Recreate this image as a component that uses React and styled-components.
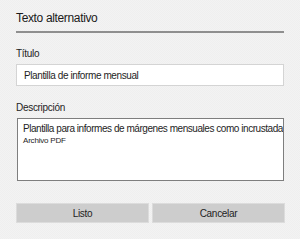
import styled, { createGlobalStyle } from "styled-components";

const GlobalS = createGlobalStyle`
    html, body {
        margin: 0;
        padding: 0;
        background: #f2f2f2;
    }
    * {
        box-sizing: border-box;
    }
`;

const App = () => {
    return (
        <>
            <GlobalS/>
            <PanelS>
                <TitleS>Texto alternativo</TitleS>
                <DividerS/>

                <LabelS>Título</LabelS>
                <FieldS>Plantilla de informe mensual</FieldS>

                <LabelS $top={16}>Descripción</LabelS>
                <AreaS>
                    <AreaLineS>Plantilla para informes de márgenes mensuales como incrustada</AreaLineS>
                    <AreaSmallS>Archivo PDF</AreaSmallS>
                </AreaS>

                <ButtonRowS>
                    <ButtonS type="button">Listo</ButtonS>
                    <ButtonS type="button">Cancelar</ButtonS>
                </ButtonRowS>
            </PanelS>
        </>
    );
};

const PanelS = styled.div`
    width: 300px;
    height: 239px;
    padding: 11px 16px 0 16px;
    display: flex;
    flex-direction: column;
    font-family: "Liberation Sans", Arial, sans-serif;
    color: #1e1e1e;
    background: repeating-conic-gradient(#f3f3f3 0 25%, #efefef 0 50%) 0 0 / 2px 2px;
`;

const TitleS = styled.div`
    font-size: 12px;
    line-height: 15px;
    letter-spacing: -0.35px;
    color: #1a1a1a;
`;

const DividerS = styled.div`
    width: 268px;
    height: 2px;
    margin-top: 5px;
    background: #8f8f8f;
`;

const LabelS = styled.div`
    margin-top: ${({$top}) => ($top ?? 15)}px;
    font-size: 10px;
    line-height: 12px;
    letter-spacing: -0.3px;
`;

const FieldS = styled.div`
    width: 268px;
    height: 22px;
    margin-top: 4px;
    padding: 2px 7px 0 7px;
    background: #ffffff;
    border: 1px solid #d4d4d4;
    font-size: 10px;
    line-height: 18px;
    letter-spacing: -0.4px;
    white-space: nowrap;
`;

const AreaS = styled.div`
    width: 267px;
    height: 63px;
    margin: 4px 0 0 1px;
    padding: 4px 0 0 5px;
    background: #ffffff;
    border: 1px solid #7e7e7e;
    white-space: nowrap;
    overflow: hidden;
`;

const AreaLineS = styled.div`
    font-size: 10px;
    line-height: 12px;
    letter-spacing: -0.45px;
`;

const AreaSmallS = styled.div`
    font-size: 8px;
    line-height: 12px;
    letter-spacing: -0.2px;
`;

const ButtonRowS = styled.div`
    width: 269px;
    margin-top: 22px;
    display: grid;
    grid-template-columns: 1fr 1fr;
    gap: 3px;
`;

const ButtonS = styled.button`
    height: 20px;
    padding: 0;
    background: #cdcdcd;
    border: 1px solid #dcdcdc;
    font-family: "Liberation Sans", Arial, sans-serif;
    font-size: 10px;
    letter-spacing: -0.3px;
    color: #1e1e1e;
    cursor: pointer;
`;

export default App;
